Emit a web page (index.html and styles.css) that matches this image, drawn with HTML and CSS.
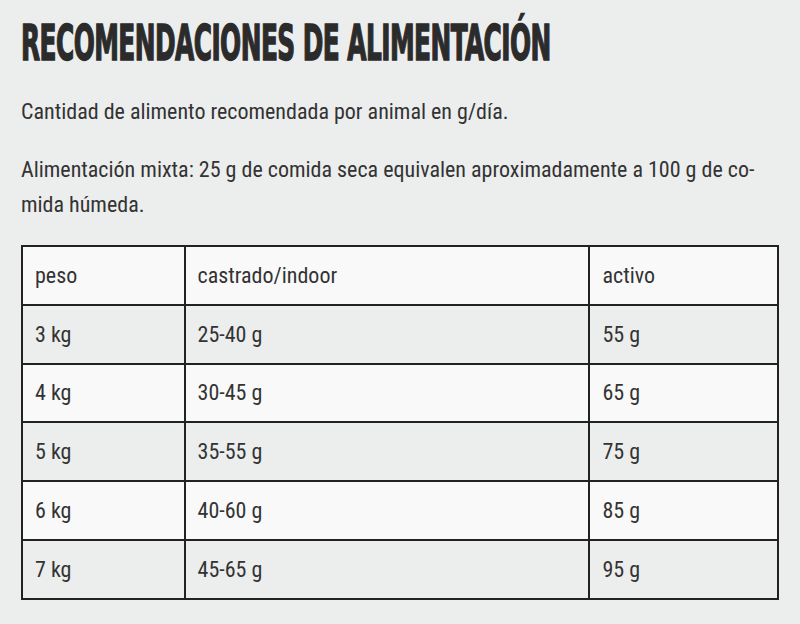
FILE: index.html
```html
<!DOCTYPE html>
<html lang="es">
<head>
<meta charset="utf-8">
<link rel="stylesheet" href="styles.css">
</head>
<body>
<main class="page">
  <h1 class="title">RECOMENDACIONES DE ALIMENTACIÓN</h1>
  <p class="text">Cantidad de alimento recomendada por animal en g/día.</p>
  <p class="text">Alimentación mixta: 25 g de comida seca equivalen aproximadamente a 100 g de co&shy;mida húmeda.</p>
  <table class="feed">
    <colgroup>
      <col class="c1"><col class="c2"><col class="c3">
    </colgroup>
    <tr class="light"><td>peso</td><td>castrado/indoor</td><td>activo</td></tr>
    <tr class="grey"><td>3 kg</td><td>25-40 g</td><td>55 g</td></tr>
    <tr class="light"><td>4 kg</td><td>30-45 g</td><td>65 g</td></tr>
    <tr class="grey"><td>5 kg</td><td>35-55 g</td><td>75 g</td></tr>
    <tr class="light"><td>6 kg</td><td>40-60 g</td><td>85 g</td></tr>
    <tr class="grey"><td>7 kg</td><td>45-65 g</td><td>95 g</td></tr>
  </table>
</main>
</body>
</html>
```

FILE: styles.css
```css
html, body {
  margin: 0;
  padding: 0;
  background: #eceded;
}
.page {
  padding: 0 21px;
  color: #333;
  font-family: "Roboto Condensed", Roboto, "Liberation Sans Narrow", sans-serif;
  font-stretch: condensed;
}
.title {
  margin: 0;
  padding-top: 18px;
  height: 76px;
  font-family: "DejaVu Sans Condensed", "DejaVu Sans", sans-serif;
  font-stretch: condensed;
  font-weight: 900;
  font-size: 50px;
  line-height: 50px;
  color: #2b2b2b;
  letter-spacing: -1px;
  -webkit-text-stroke: 1.5px #2b2b2b;
  transform: scaleX(0.552);
  transform-origin: left top;
  white-space: nowrap;
}
.text {
  margin: 0 0 23px;
  font-size: 22px;
  line-height: 35px;
}
.feed {
  width: 758px;
  border-collapse: collapse;
  font-size: 22px;
}
.c1 { width: 163px; }
.c2 { width: 406px; }
.c3 { width: 189px; }
.feed td {
  border: 2px solid #222;
  height: 58.8px;
  padding: 0 12px;
  box-sizing: border-box;
  vertical-align: middle;
}
.light { background: #f9f9f9; }
.grey { background: #eceded; }
```
